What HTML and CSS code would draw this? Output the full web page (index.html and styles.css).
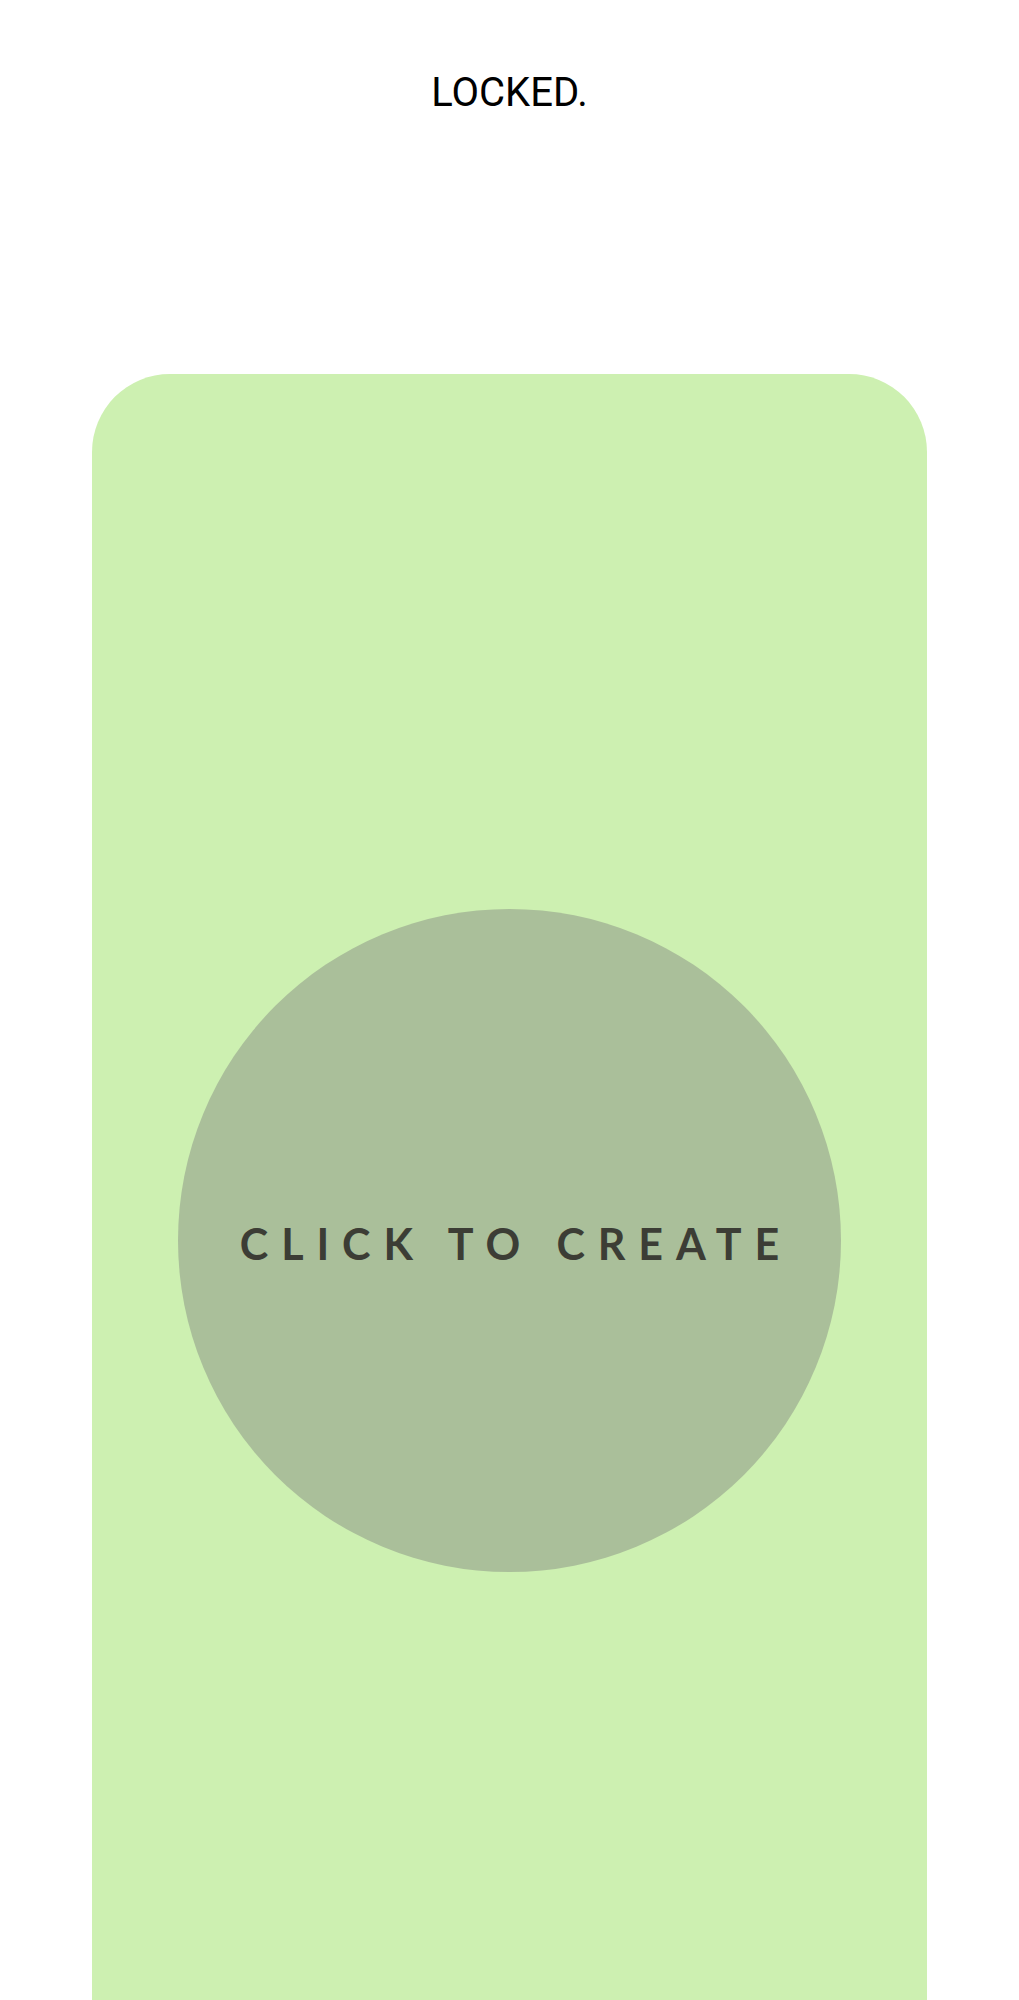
FILE: index.html
```html
<!DOCTYPE html>
<html lang="en">
<head>
<meta charset="utf-8">
<title>Locked</title>
<link rel="stylesheet" href="styles.css">
</head>
<body>
  <header class="top">
    <h1 class="status">LOCKED.</h1>
  </header>
  <main class="card">
    <button class="create" type="button">
      <span class="create-label">CLICK TO CREATE</span>
    </button>
  </main>
</body>
</html>
```
FILE: styles.css
```css
html, body {
  margin: 0;
  padding: 0;
  background: #ffffff;
}

.top {
  padding-top: 69px;
  text-align: center;
}

.status {
  margin: 0;
  font-family: Roboto, "Liberation Sans", sans-serif;
  font-weight: 400;
  font-size: 40px;
  line-height: 47px;
  color: #000000;
}

.card {
  width: 82%;
  height: 1732px;
  margin: 258px auto 0;
  background: #cdf0b1;
  border-radius: 78px;
  display: flex;
  align-items: center;
  justify-content: center;
}

.create {
  width: 663px;
  height: 663px;
  border-radius: 50%;
  border: 0;
  padding: 0;
  background: #aabf9a;
  display: flex;
  align-items: center;
  justify-content: center;
  cursor: pointer;
}

.create-label {
  padding-top: 6px;
  font-family: Lato, "Liberation Sans", sans-serif;
  font-weight: 700;
  font-size: 43px;
  letter-spacing: 0.3em;
  margin-right: -0.3em;
  color: #3c3d35;
}
```
